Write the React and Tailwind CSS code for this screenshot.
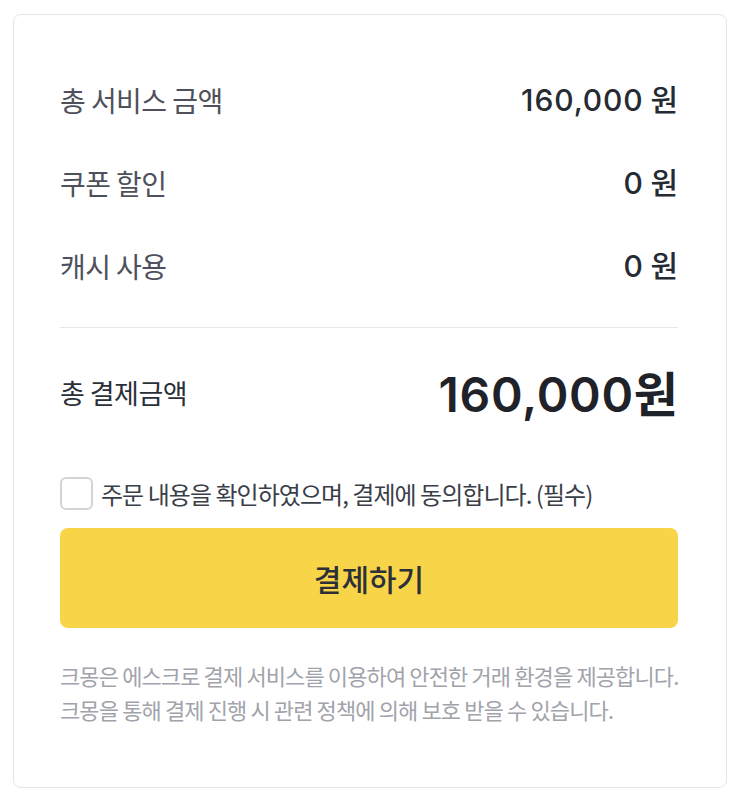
const KR = { fontFamily: '"Noto Sans CJK KR", "Noto Sans", sans-serif' };
const NUM = { fontFamily: 'Inter, "Noto Sans CJK KR", sans-serif' };

const rows = [
  { label: '총 서비스 금액', value: '160,000' },
  { label: '쿠폰 할인', value: '0' },
  { label: '캐시 사용', value: '0' },
];

export default function App() {
  return (
    <div className="min-h-screen bg-white pt-[14px] pl-[13px] pr-[16px]" style={KR}>
      <div className="rounded-lg border border-[#e4e4ea] bg-white pl-[46px] pr-[48px] pt-[43px] pb-[61px]">
        {rows.map((r) => (
          <div key={r.label} className="flex h-[83px] items-center justify-between">
            <span className="text-[28px] text-[#4e515c] tracking-[-0.02em]">{r.label}</span>
            <span className="text-[30px] font-medium text-[#262a33]">
              <span style={NUM} className="tracking-[0.03em]">{r.value}</span> 원
            </span>
          </div>
        ))}
        <div className="mt-[20px] h-px bg-[#e5e7eb]" />
        <div className="flex h-[130px] items-center justify-between">
          <span className="text-[27px] text-[#2b2f38] tracking-[-0.02em]">총 결제금액</span>
          <span className="text-[48px] font-semibold leading-none text-[#1f2228]">
            <span style={NUM} className="tracking-[0.015em]">160,000</span>원
          </span>
        </div>
        <label className="mt-[19px] flex items-center gap-[8px]">
          <span className="h-[33px] w-[33px] shrink-0 rounded-[6px] border-2 border-[#d4d4d8] bg-white" />
          <span className="text-[24px] leading-[33px] text-[#3a3e48] tracking-[-0.04em]">
            주문 내용을 확인하였으며, 결제에 동의합니다. (필수)
          </span>
        </label>
        <button
          type="button"
          className="mt-[18px] flex h-[100px] w-full items-center justify-center rounded-lg bg-[#f8d548] text-[30px] font-medium text-[#2d3039]"
        >
          결제하기
        </button>
        <div className="mt-[30px] whitespace-nowrap text-[22px] leading-[34px] text-[#a1a3ab] tracking-[-0.04em]">
          <p>크몽은 에스크로 결제 서비스를 이용하여 안전한 거래 환경을 제공합니다.</p>
          <p>크몽을 통해 결제 진행 시 관련 정책에 의해 보호 받을 수 있습니다.</p>
        </div>
      </div>
    </div>
  );
}
